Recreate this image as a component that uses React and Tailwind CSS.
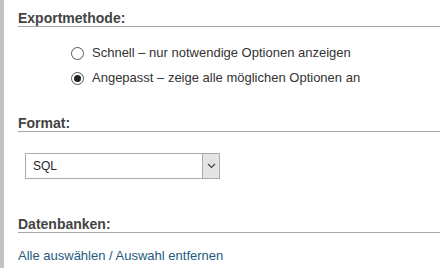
import React, { useState } from 'react';

const font = { fontFamily: '"Liberation Sans", Arial, sans-serif' };

function Heading({ children, className = '' }) {
  return (
    <div className={`border-b border-[#a8a8a8] text-[14px] leading-[16px] font-bold text-[#444] ${className}`}>
      {children}
    </div>
  );
}

function Radio({ checked, label, onSelect }) {
  return (
    <label className="flex items-center h-[16px] cursor-pointer" onClick={onSelect}>
      <span className="w-[13px] h-[13px] rounded-full border border-[#555] bg-white flex items-center justify-center">
        {checked && <span className="w-[7px] h-[7px] rounded-full bg-[#222]" />}
      </span>
      <span className="ml-[8px] text-[13px] text-[#333]">{label}</span>
    </label>
  );
}

export default function App() {
  const [method, setMethod] = useState('custom');

  return (
    <div className="w-[440px] h-[268px] bg-white flex overflow-hidden" style={font}>
      <div className="w-[4px] bg-[#c2c2c2] shrink-0" />
      <div className="flex-1 pl-[14px]">
        <Heading className="mt-[10px]">Exportmethode:</Heading>

        <div className="pl-[53px] mt-[18px] flex flex-col gap-[9px]">
          <Radio
            checked={method === 'quick'}
            label="Schnell – nur notwendige Optionen anzeigen"
            onSelect={() => setMethod('quick')}
          />
          <Radio
            checked={method === 'custom'}
            label="Angepasst – zeige alle möglichen Optionen an"
            onSelect={() => setMethod('custom')}
          />
        </div>

        <Heading className="mt-[29px]">Format:</Heading>

        <div className="ml-[7px] mt-[21px] w-[195px] h-[26px] border border-[#ababab] flex">
          <div className="flex-1 pl-[7px] flex items-center text-[12px] text-[#222]">SQL</div>
          <div className="w-[17px] bg-[#e4e4e4] border-l border-[#ababab] flex items-center justify-center">
            <svg width="9" height="6" viewBox="0 0 9 6">
              <path d="M1 1l3.5 3.5L8 1" fill="none" stroke="#444" strokeWidth="1.2" />
            </svg>
          </div>
        </div>

        <Heading className="mt-[37px]">Datenbanken:</Heading>

        <div className="mt-[15px] text-[13px] leading-[16px] text-[#235a81]">
          Alle auswählen / Auswahl entfernen
        </div>
      </div>
    </div>
  );
}
